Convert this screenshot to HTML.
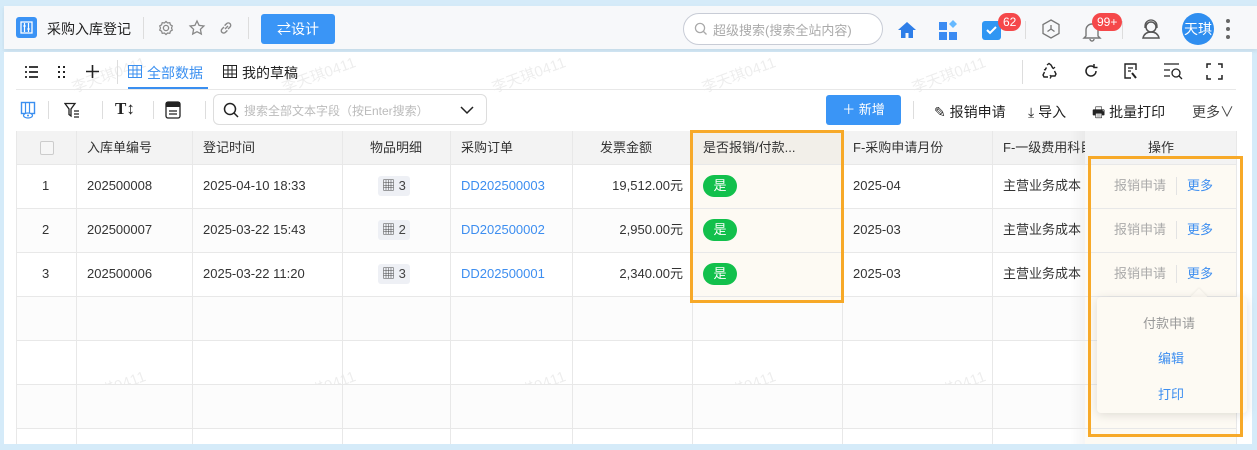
<!DOCTYPE html>
<html><head><meta charset="utf-8"><style>
*{box-sizing:border-box;margin:0;padding:0}
body{width:1257px;height:450px;overflow:hidden;background:#d5ebf9;font-family:"Liberation Sans","Noto Sans CJK SC",sans-serif;font-size:13px;color:#333;position:relative}
.a{position:absolute}
.hdr{left:4px;top:6px;width:1253px;height:43px;background:#f7f8fa;box-shadow:0 2px 4px rgba(0,0,0,.08)}
.main{left:4px;top:52px;width:1248px;height:392px;background:#fff}
.t{position:absolute;white-space:nowrap}
.cell{position:absolute;height:44px;line-height:44px;white-space:nowrap;font-size:13px;color:#333}
.hl{position:absolute;height:1px;background:#e8e8e8}
.cv{position:absolute;width:1px;background:#e8e8e8;top:131px;height:313px}
.tag{display:inline-block;background:#eef0f5;border-radius:3px;padding:0 4px;height:20px;line-height:20px;font-size:13px;color:#444}
.yes{position:absolute;width:34px;height:22px;border-radius:11px;background:#12c04c;color:#fff;text-align:center;line-height:22px;font-size:13px}
.wm{position:absolute;color:rgba(0,0,0,.07);font-size:15px;transform:rotate(-20deg);white-space:nowrap}
.badge{position:absolute;background:#f5484a;color:#fff;border-radius:9px;height:18px;line-height:18px;font-size:12px;padding:0 5px}
</style></head><body>
<div class="a hdr"></div>
<div class="a" style="left:16px;top:17px;width:21px;height:21px;background:#3b93f5;border-radius:3px"><svg width="21" height="21"><rect x="5" y="5" width="11" height="11" fill="none" stroke="#fff" stroke-width="1.3"/><path d="M8.5 6v9M12.5 6v9" stroke="#fff" stroke-width="1.2"/><rect x="7.5" y="8" width="2" height="2" fill="#fff"/><rect x="11.5" y="11" width="2" height="2" fill="#fff"/></svg></div>
<div class="t" style="left:47px;top:19px;font-size:14px;color:#222">采购入库登记</div>
<div class="a" style="left:143px;top:17px;width:1px;height:22px;background:#ddd"></div>
<svg class="a" style="left:158px;top:20px" width="16" height="16"><circle cx="8" cy="8" r="2.6" fill="none" stroke="#888" stroke-width="1.3"/><path d="M8 1.5l1.6 1.5 2.2-.3.6 2.1 1.9 1.1-.8 2.1.8 2.1-1.9 1.1-.6 2.1-2.2-.3L8 14.5 6.4 13l-2.2.3-.6-2.1-1.9-1.1.8-2.1-.8-2.1 1.9-1.1.6-2.1 2.2.3z" fill="none" stroke="#888" stroke-width="1.2"/></svg>
<svg class="a" style="left:188px;top:19px" width="18" height="18"><path d="M9 2l2.1 4.4 4.8.6-3.5 3.3.9 4.7L9 12.7 4.7 15l.9-4.7L2.1 7l4.8-.6z" fill="none" stroke="#888" stroke-width="1.3"/></svg>
<svg class="a" style="left:218px;top:20px" width="16" height="16"><path d="M7 9l3-3M6 7L4 9a2.4 2.4 0 003.4 3.4l2-2M10 9l2-2A2.4 2.4 0 008.6 3.6l-2 2" fill="none" stroke="#888" stroke-width="1.4"/></svg>
<div class="a" style="left:248px;top:17px;width:1px;height:22px;background:#ddd"></div>
<div class="a" style="left:261px;top:14px;width:74px;height:30px;background:#3a95f6;border-radius:3px;color:#fff;text-align:center;line-height:30px;font-size:14px">⇄设计</div>
<div class="a" style="left:683px;top:13px;width:200px;height:32px;border:1px solid #c8ccd6;border-radius:16px;background:#fff"></div>
<svg class="a" style="left:694px;top:22px" width="14" height="14"><circle cx="6" cy="6" r="4.6" fill="none" stroke="#aaa" stroke-width="1.3"/><path d="M9.5 9.5l3 3" stroke="#aaa" stroke-width="1.3"/></svg>
<div class="t" style="left:713px;top:20px;color:#aaa;font-size:13px">超级搜索(搜索全站内容)</div>
<svg class="a" style="left:897px;top:20px" width="20" height="20"><path d="M10 2L1 10h3v8h4.5v-5h3v5H16v-8h3z" fill="#2e7ee8"/></svg>
<svg class="a" style="left:938px;top:19px" width="22" height="22"><rect x="1" y="3" width="8" height="8" fill="#3b8bf2"/><rect x="1" y="13" width="8" height="8" fill="#3b8bf2"/><rect x="11" y="13" width="8" height="8" fill="#3b8bf2"/><path d="M15 1l4 4-4 4-4-4z" fill="#66b9ff"/></svg>
<div class="a" style="left:982px;top:21px;width:19px;height:19px;background:#2f96f3;border-radius:3px"></div>
<svg class="a" style="left:984px;top:24px" width="15" height="12"><path d="M3 6l3 3 6-6" fill="none" stroke="#fff" stroke-width="2"/></svg>
<div class="badge" style="left:998px;top:13px">62</div>
<div class="a" style="left:1025px;top:21px;width:1px;height:18px;background:#ddd"></div>
<svg class="a" style="left:1040px;top:18px" width="22" height="22"><path d="M11 2l8 4.5v9L11 20l-8-4.5v-9z" fill="none" stroke="#777" stroke-width="1.3"/><path d="M11 11V7M11 11l-3.5 2.5M11 11l3.5 2.5" stroke="#777" stroke-width="1.3"/></svg>
<svg class="a" style="left:1082px;top:20px" width="20" height="22"><path d="M4 16V10a6 6 0 0112 0v6l2 2H2z M8 19a2 2 0 004 0" fill="none" stroke="#777" stroke-width="1.4"/></svg>
<div class="badge" style="left:1092px;top:13px">99+</div>
<div class="a" style="left:1122px;top:21px;width:1px;height:18px;background:#ddd"></div>
<svg class="a" style="left:1140px;top:18px" width="22" height="22"><circle cx="11" cy="9" r="5" fill="none" stroke="#555" stroke-width="1.5"/><path d="M3 20c1-4 4-6 8-6s7 2 8 6z" fill="none" stroke="#555" stroke-width="1.5"/><path d="M5 10V8a6 6 0 0112 0v2" fill="none" stroke="#555" stroke-width="1.3"/></svg>
<div class="a" style="left:1182px;top:13px;width:32px;height:32px;border-radius:50%;background:#2f8ef0;color:#fff;text-align:center;line-height:32px;font-size:14px">天琪</div>
<div class="a" style="left:1226px;top:19px;width:4px;height:4px;border-radius:2px;background:#666"></div>
<div class="a" style="left:1226px;top:27px;width:4px;height:4px;border-radius:2px;background:#666"></div>
<div class="a" style="left:1226px;top:35px;width:4px;height:4px;border-radius:2px;background:#666"></div>

<div class="a main"></div>
<!-- watermarks -->
<div class="wm" style="left:70px;top:64px">李天琪0411</div><div class="wm" style="left:280px;top:64px">李天琪0411</div><div class="wm" style="left:490px;top:64px">李天琪0411</div><div class="wm" style="left:700px;top:64px">李天琪0411</div><div class="wm" style="left:910px;top:64px">李天琪0411</div>
<div class="wm" style="left:70px;top:220px">李天琪0411</div><div class="wm" style="left:280px;top:220px">李天琪0411</div><div class="wm" style="left:490px;top:220px">李天琪0411</div><div class="wm" style="left:700px;top:220px">李天琪0411</div><div class="wm" style="left:910px;top:220px">李天琪0411</div>
<div class="wm" style="left:70px;top:378px">李天琪0411</div><div class="wm" style="left:280px;top:378px">李天琪0411</div><div class="wm" style="left:490px;top:378px">李天琪0411</div><div class="wm" style="left:700px;top:378px">李天琪0411</div><div class="wm" style="left:910px;top:378px">李天琪0411</div>
<!-- tabs row -->
<svg class="a" style="left:24px;top:65px" width="15" height="14"><path d="M1 2h2M5 2h9M1 7h2M5 7h9M1 12h2M5 12h9" stroke="#222" stroke-width="1.8"/></svg>
<svg class="a" style="left:57px;top:65px" width="10" height="14"><g fill="#222"><rect x="1" y="1" width="2" height="2"/><rect x="6" y="1" width="2" height="2"/><rect x="1" y="6" width="2" height="2"/><rect x="6" y="6" width="2" height="2"/><rect x="1" y="11" width="2" height="2"/><rect x="6" y="11" width="2" height="2"/></g></svg>
<svg class="a" style="left:85px;top:64px" width="15" height="15"><path d="M7.5 1v13M1 7.5h13" stroke="#222" stroke-width="1.6"/></svg>
<div class="a" style="left:117px;top:60px;width:1px;height:24px;background:#ddd"></div>
<svg class="a" style="left:128px;top:65px" width="14" height="13"><rect x=".5" y=".5" width="13" height="12" fill="none" stroke="#3a8ff0"/><path d="M.5 5h13M.5 9h13M5 .5v12M9 .5v12" stroke="#3a8ff0"/></svg>
<div class="t" style="left:147px;top:63px;color:#3a8ff0;font-size:14px">全部数据</div>
<div class="a" style="left:128px;top:87px;width:80px;height:2px;background:#3a8ff0"></div>
<svg class="a" style="left:223px;top:65px" width="14" height="13"><rect x=".5" y=".5" width="13" height="12" fill="none" stroke="#222"/><path d="M.5 5h13M.5 9h13M5 .5v12M9 .5v12" stroke="#222"/></svg>
<div class="t" style="left:242px;top:63px;color:#222;font-size:14px">我的草稿</div>
<div class="a" style="left:16px;top:89px;width:1220px;height:1px;background:#e8e8e8"></div>
<div class="a" style="left:1022px;top:60px;width:1px;height:24px;background:#ddd"></div>
<svg class="a" style="left:1040px;top:62px" width="18" height="18"><path d="M7 3l2-1.5 2 1.5 2 3.5M14.5 9l1.5 3-1 2H11M8 15H4l-1-2 1.5-3M5 8l1.5-2.5" fill="none" stroke="#222" stroke-width="1.4"/><path d="M12 5l1.5 1.5L15 5M10 13l1 2-1 1.5M4 7.5L5 8l1-1.5" fill="none" stroke="#222" stroke-width="1.2"/></svg>
<svg class="a" style="left:1083px;top:63px" width="16" height="16"><path d="M13 8a5 5 0 11-2-4M11 1v3.5h3.5" fill="none" stroke="#222" stroke-width="1.5"/></svg>
<svg class="a" style="left:1123px;top:62px" width="16" height="18"><path d="M13 8V2H2v14h6" fill="none" stroke="#222" stroke-width="1.4"/><path d="M5 6h5M5 9h3" stroke="#222" stroke-width="1.2"/><path d="M9 11l4 5" stroke="#222" stroke-width="2"/></svg>
<svg class="a" style="left:1163px;top:62px" width="20" height="18"><path d="M1 2h15M1 8h6M1 14h6" stroke="#222" stroke-width="1.3"/><circle cx="13" cy="11" r="4" fill="none" stroke="#222" stroke-width="1.3"/><path d="M16 14l3 3" stroke="#222" stroke-width="1.3"/></svg>
<svg class="a" style="left:1206px;top:63px" width="17" height="17"><path d="M1 5V1h4M12 1h4v4M16 12v4h-4M5 16H1v-4" fill="none" stroke="#222" stroke-width="1.5"/></svg>

<!-- toolbar -->
<svg class="a" style="left:20px;top:101px" width="17" height="18"><rect x="1.5" y="1.5" width="13" height="11" fill="none" stroke="#3a8ff0" stroke-width="1.4"/><path d="M5.5 2v10M9.5 2v10" stroke="#3a8ff0" stroke-width="1.2"/><ellipse cx="8" cy="14.5" rx="4.5" ry="2.5" fill="#fff" stroke="#3a8ff0" stroke-width="1.2"/><circle cx="8" cy="14.5" r="1" fill="#3a8ff0"/></svg>
<div class="a" style="left:48px;top:101px;width:1px;height:18px;background:#ddd"></div>
<svg class="a" style="left:64px;top:102px" width="16" height="16"><path d="M1 1.5h10L7 7v7L5 12.5V7z" fill="none" stroke="#222" stroke-width="1.3"/><path d="M10 9h5M10 12h5M10 15h5" stroke="#222" stroke-width="1.2"/></svg>
<div class="a" style="left:102px;top:101px;width:1px;height:18px;background:#ddd"></div>
<div class="t" style="left:115px;top:99px;font-size:17px;font-weight:bold;color:#222;font-family:'Liberation Serif',serif">T↕</div>
<div class="a" style="left:153px;top:101px;width:1px;height:18px;background:#ddd"></div>
<svg class="a" style="left:165px;top:101px" width="16" height="18"><rect x="1" y="1" width="14" height="16" rx="2" fill="none" stroke="#222" stroke-width="1.3"/><rect x="1" y="1" width="14" height="5" fill="#222"/><path d="M4 10h8M4 13h8" stroke="#222" stroke-width="1.2"/></svg>
<div class="a" style="left:205px;top:101px;width:1px;height:18px;background:#ddd"></div>
<div class="a" style="left:213px;top:94px;width:274px;height:31px;border:1px solid #ddd;border-radius:6px"></div>
<svg class="a" style="left:223px;top:102px" width="16" height="16"><circle cx="7" cy="7" r="5.5" fill="none" stroke="#222" stroke-width="1.5"/><path d="M11 11l4 4" stroke="#222" stroke-width="1.5"/></svg>
<div class="t" style="left:244px;top:102px;font-size:12px;color:#bbb">搜索全部文本字段（按Enter搜索）</div>
<svg class="a" style="left:460px;top:106px" width="14" height="9"><path d="M1 1l6 6 6-6" fill="none" stroke="#222" stroke-width="1.5"/></svg>
<div class="a" style="left:826px;top:95px;width:75px;height:30px;background:#3a95f6;border-radius:3px;color:#fff;text-align:center;line-height:30px;font-size:13px">＋ 新增</div>
<div class="a" style="left:913px;top:101px;width:1px;height:18px;background:#ddd"></div>
<div class="t" style="left:934px;top:102px;font-size:14px;color:#222">✎ 报销申请</div>
<div class="t" style="left:1028px;top:102px;font-size:14px;color:#222">⤓ 导入</div>
<div class="t" style="left:1092px;top:102px;font-size:14px;color:#222">🖶 批量打印</div>
<div class="t" style="left:1192px;top:102px;font-size:14px;color:#444">更多∨</div>

<!-- table -->
<div class="a" style="left:16px;top:131px;width:1220px;height:33px;background:#f3f3f3"></div>
<div class="a" style="left:16px;top:208px;width:1220px;height:44px;background:#fcfcfc"></div>
<div class="a" style="left:16px;top:296px;width:1220px;height:44px;background:#fcfcfc"></div>
<div class="a" style="left:16px;top:384px;width:1220px;height:44px;background:#fcfcfc"></div>
<div class="a" style="left:692px;top:131px;width:150px;height:170px;background:#fdfaf3"></div>
<div class="a" style="left:692px;top:131px;width:150px;height:33px;background:#f2efe9"></div>
<div class="a" style="left:1085px;top:164px;width:151px;height:280px;background:#fdfaf3"></div>
<div class="a" style="left:1085px;top:131px;width:151px;height:33px;background:#f3f3f3"></div>
<div class="a" style="left:1070px;top:131px;width:15px;height:313px;background:linear-gradient(90deg,rgba(0,0,0,0),rgba(0,0,0,.04))"></div>
<div class="hl" style="left:16px;top:164px;width:1220px"></div>
<div class="hl" style="left:16px;top:208px;width:1220px"></div>
<div class="hl" style="left:16px;top:252px;width:1220px"></div>
<div class="hl" style="left:16px;top:296px;width:1220px"></div>
<div class="hl" style="left:16px;top:340px;width:1220px"></div>
<div class="hl" style="left:16px;top:384px;width:1220px"></div>
<div class="hl" style="left:16px;top:428px;width:1220px"></div>
<div class="cv" style="left:16px"></div><div class="cv" style="left:76px"></div><div class="cv" style="left:192px"></div><div class="cv" style="left:342px"></div><div class="cv" style="left:450px"></div><div class="cv" style="left:572px"></div><div class="cv" style="left:692px"></div><div class="cv" style="left:842px"></div><div class="cv" style="left:992px"></div><div class="cv" style="left:1236px"></div>
<div class="a" style="left:40px;top:141px;width:14px;height:14px;border:1px solid #ccc;border-radius:2px;background:#f6f6f6"></div>
<div class="cell" style="left:87px;top:126px">入库单编号</div>
<div class="cell" style="left:203px;top:126px">登记时间</div>
<div class="cell" style="left:370px;top:126px">物品明细</div>
<div class="cell" style="left:461px;top:126px">采购订单</div>
<div class="cell" style="left:600px;top:126px">发票金额</div>
<div class="cell" style="left:703px;top:126px">是否报销/付款...</div>
<div class="cell" style="left:853px;top:126px">F-采购申请月份</div>
<div class="cell" style="left:1003px;top:126px;width:82px;overflow:hidden">F-一级费用科目</div>
<div class="cell" style="left:1148px;top:126px">操作</div>

<div class="cell" style="left:42px;top:164px">1</div><div class="cell" style="left:87px;top:164px">202500008</div><div class="cell" style="left:203px;top:164px">2025-04-10 18:33</div><div class="cell" style="left:378px;top:164px"><span class="tag">▦ 3</span></div><div class="cell" style="left:461px;top:164px;color:#3d8ef0">DD202500003</div><div class="cell" style="left:573px;top:164px;width:110px;text-align:right">19,512.00元</div><div class="cell" style="left:853px;top:164px">2025-04</div><div class="cell" style="left:1003px;top:164px">主营业务成本</div>
<div class="cell" style="left:42px;top:208px">2</div><div class="cell" style="left:87px;top:208px">202500007</div><div class="cell" style="left:203px;top:208px">2025-03-22 15:43</div><div class="cell" style="left:378px;top:208px"><span class="tag">▦ 2</span></div><div class="cell" style="left:461px;top:208px;color:#3d8ef0">DD202500002</div><div class="cell" style="left:573px;top:208px;width:110px;text-align:right">2,950.00元</div><div class="cell" style="left:853px;top:208px">2025-03</div><div class="cell" style="left:1003px;top:208px">主营业务成本</div>
<div class="cell" style="left:42px;top:252px">3</div><div class="cell" style="left:87px;top:252px">202500006</div><div class="cell" style="left:203px;top:252px">2025-03-22 11:20</div><div class="cell" style="left:378px;top:252px"><span class="tag">▦ 3</span></div><div class="cell" style="left:461px;top:252px;color:#3d8ef0">DD202500001</div><div class="cell" style="left:573px;top:252px;width:110px;text-align:right">2,340.00元</div><div class="cell" style="left:853px;top:252px">2025-03</div><div class="cell" style="left:1003px;top:252px">主营业务成本</div>
<div class="yes" style="left:703px;top:175px">是</div><div class="yes" style="left:703px;top:219px">是</div><div class="yes" style="left:703px;top:263px">是</div>
<div class="cell" style="left:1114px;top:164px;color:#aaa">报销申请</div><div class="a" style="left:1176px;top:177px;width:1px;height:18px;background:#e3e3e3"></div><div class="cell" style="left:1187px;top:164px;color:#3d8ef0">更多</div>
<div class="cell" style="left:1114px;top:208px;color:#aaa">报销申请</div><div class="a" style="left:1176px;top:221px;width:1px;height:18px;background:#e3e3e3"></div><div class="cell" style="left:1187px;top:208px;color:#3d8ef0">更多</div>
<div class="cell" style="left:1114px;top:252px;color:#aaa">报销申请</div><div class="a" style="left:1176px;top:265px;width:1px;height:18px;background:#e3e3e3"></div><div class="cell" style="left:1187px;top:252px;color:#3d8ef0">更多</div>

<div class="a" style="left:1193px;top:291px;width:12px;height:12px;background:#fdfaf3;transform:rotate(45deg);box-shadow:-1px -1px 2px rgba(0,0,0,.05)"></div>
<div class="a" style="left:1097px;top:297px;width:150px;height:116px;background:#fdfaf3;border-radius:4px;box-shadow:0 2px 10px rgba(0,0,0,.12)"></div>
<div class="t" style="left:1143px;top:313px;color:#999">付款申请</div>
<div class="t" style="left:1158px;top:348px;color:#3d8ef0">编辑</div>
<div class="t" style="left:1158px;top:384px;color:#3d8ef0">打印</div>

<div class="a" style="left:690px;top:130px;width:154px;height:173px;border:3px solid #f7a928"></div>
<div class="a" style="left:1088px;top:156px;width:155px;height:281px;border:3px solid #f7a928"></div>
</body></html>
